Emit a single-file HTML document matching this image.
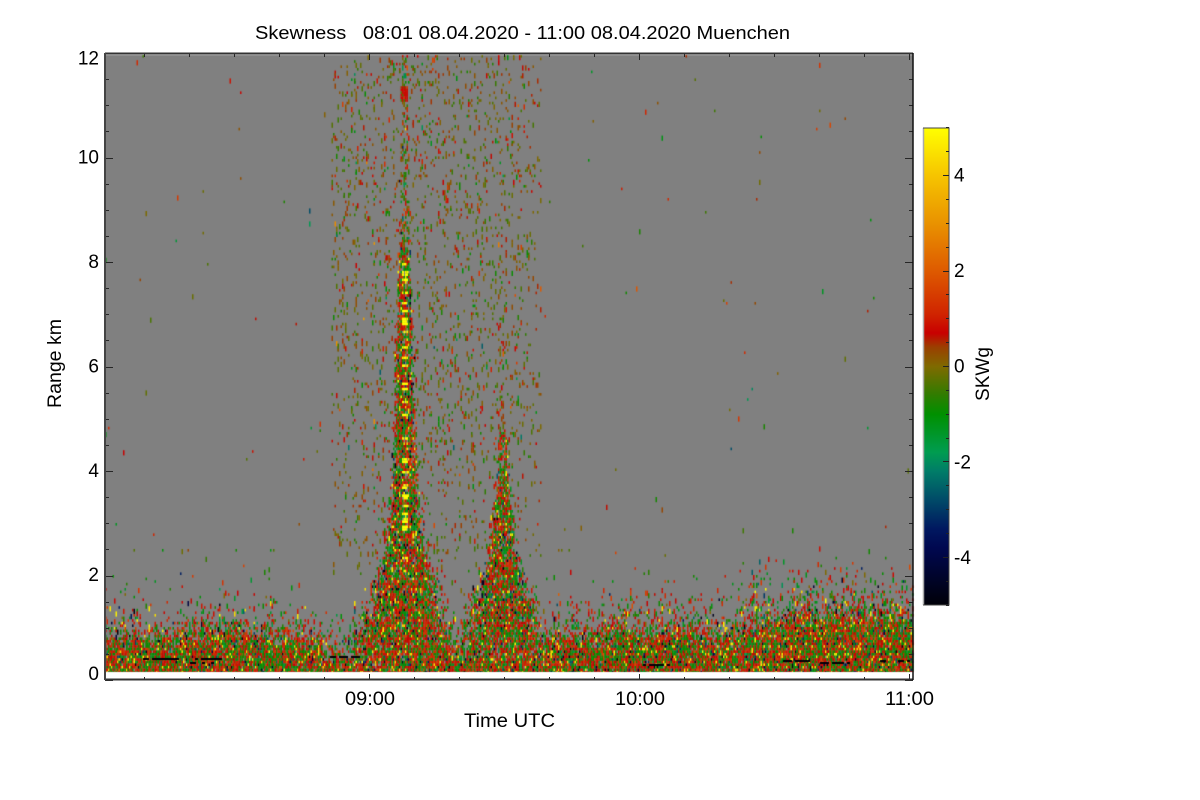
<!DOCTYPE html>
<html><head><meta charset="utf-8"><style>
html,body{margin:0;padding:0;background:#fff;width:1200px;height:800px;overflow:hidden}
canvas,svg{position:absolute;left:0;top:0}
text{font-family:"Liberation Sans",sans-serif;fill:#000;font-size:19px}
</style></head><body>
<canvas id="c" width="1200" height="800"></canvas>
<svg width="1200" height="800" viewBox="0 0 1200 800" xmlns="http://www.w3.org/2000/svg">
<defs><linearGradient id="g" x1="0" y1="0" x2="0" y2="1">
<stop offset="0" stop-color="#ffff00"/><stop offset=".1" stop-color="#f6c400"/><stop offset=".2" stop-color="#e99200"/><stop offset=".3" stop-color="#de5a00"/><stop offset=".39" stop-color="#d02400"/><stop offset=".43" stop-color="#c80000"/><stop offset=".46" stop-color="#9a4000"/><stop offset=".5" stop-color="#7f6a00"/><stop offset=".56" stop-color="#2f7c00"/><stop offset=".6" stop-color="#009000"/><stop offset=".68" stop-color="#009c50"/><stop offset=".72" stop-color="#007c68"/><stop offset=".78" stop-color="#004a68"/><stop offset=".84" stop-color="#001860"/><stop offset=".88" stop-color="#000850"/><stop offset="1" stop-color="#000008"/>
</linearGradient></defs>
<rect x="923.5" y="128" width="25" height="477" fill="url(#g)"/>
<path d="M923.5 128V605" stroke="#aaa" stroke-width="1.5" fill="none"/>
<path d="M923 128H949V605H923" stroke="#444" stroke-width="1" fill="none"/>
<path id="cbt" stroke="#222" stroke-width="1" fill="none" d=""/>
<path id="ax" stroke="#262626" stroke-width="1" fill="none" d=""/>
<path d="M105 53.5H913M105 679.5H913" stroke="#333" stroke-width="2" fill="none"/>
<path d="M105 53V680" stroke="#444" stroke-width="2" fill="none"/>
<path d="M913 53V680" stroke="#111" stroke-width="1.5" fill="none"/>
<text x="255" y="39" textLength="535" lengthAdjust="spacingAndGlyphs" xml:space="preserve" style="font-size:18px">Skewness   08:01 08.04.2020 - 11:00 08.04.2020 Muenchen</text>
<g text-anchor="end">
<text x="99" y="64.500">12</text><text x="99" y="163.500">10</text><text x="99" y="268">8</text><text x="99" y="372.500">6</text><text x="99" y="477">4</text><text x="99" y="581">2</text><text x="99" y="680">0</text>
</g>
<text x="345" y="705" textLength="50" lengthAdjust="spacingAndGlyphs">09:00</text><text x="615" y="705" textLength="50" lengthAdjust="spacingAndGlyphs">10:00</text><text x="885" y="705" textLength="49" lengthAdjust="spacingAndGlyphs">11:00</text>
<text x="464" y="727" textLength="91" lengthAdjust="spacingAndGlyphs">Time UTC</text>
<text transform="translate(61,408) rotate(-90)" textLength="89" lengthAdjust="spacingAndGlyphs">Range km</text>
<text transform="translate(989,401) rotate(-90)" textLength="54" lengthAdjust="spacingAndGlyphs">SKWg</text>
<text x="954" y="181.500">4</text><text x="954" y="277">2</text><text x="954" y="372.500">0</text><text x="954" y="468.500">-2</text><text x="954" y="564">-4</text>
</svg>
<script>
(function(){
var s=123456789;function R(){s^=s<<13;s^=s>>>17;s^=s<<5;return (s>>>0)/4294967296;}
function G(){return Math.sqrt(-2*Math.log(R()+1e-9))*Math.cos(6.2832*R());}
var ctx=document.getElementById('c').getContext('2d');
ctx.fillStyle='#fff';ctx.fillRect(0,0,1200,800);
ctx.fillStyle='#808080';ctx.fillRect(105,55,808,617);
var st=[[5,255,255,0],[4,246,196,0],[3,233,146,0],[2,222,90,0],[1.1,208,36,0],[.7,200,0,0],[.4,154,64,0],[0,127,106,0],[-.6,47,124,0],[-1,0,144,0],[-1.8,0,156,80],[-2.2,0,124,104],[-2.8,0,74,104],[-3.4,0,24,96],[-3.8,0,8,80],[-5,0,0,8]];
function col(v){v=Math.max(-5,Math.min(5,v));
 for(var i=1;i<st.length;i++){if(v>=st[i][0]){var a=st[i-1],b=st[i],t=(v-b[0])/(a[0]-b[0]);
  return 'rgb('+Math.round(b[1]+(a[1]-b[1])*t)+','+Math.round(b[2]+(a[2]-b[2])*t)+','+Math.round(b[3]+(a[3]-b[3])*t)+')';}}
 return '#000';}
function lerp(t,x){for(var i=1;i<t.length;i++){if(x<=t[i][0]){var a=t[i-1],b=t[i];return a[1]+(b[1]-a[1])*(x-a[0])/(b[0]-a[0]);}}return t[t.length-1][1];}
var W1=[[55,1.8],[200,3],[300,4.5],[400,6],[450,7],[500,9],[550,13],[600,22],[640,32],[672,38]];
var W2=[[330,.6],[400,1.2],[440,2.5],[500,5],[550,8],[590,15],[620,22],[672,30]];
var w=1.5,h=2.6;
var gv=[];var cols=Math.ceil(808/w);var val=0;
for(var i=0;i<cols;i++){val=val*.97+G()*.9;gv[i]=val;}
var yr=[];for(var j=0;j<238;j++)yr[j]=R()<.34;
for(var i=0;i<cols;i++){var x=105+i*w;
 var d;
 if(x<330)d=30+5*Math.sin((x-105)/60)+gv[i]*.8; else if(x<540)d=20+gv[i]*.5; else d=30+(x-540)*.07+gv[i]*.9;
 if(x>322&&x<368)d=12+gv[i]*.4;
 for(var j=0;j<238;j++){var y=55+j*h,hh=672-y,p=0,sig=.9,core=0;
  var bg=.0012;if(Math.abs(y-549)<2.5&&((x>118&&x<305)||(x>540&&x<620)))bg=.05;
  p=bg;
  var z=(hh-d)/(x<330?20:22);
  var pg=z<0?.97-.25*Math.max(0,1-(d-hh)/12):.72*Math.exp(-z*1.3);
  if(pg<.008)pg=0;
  if(hh>(d+72))pg=0;
  var ampG=pg>.45?2.3:(pg>.15?1.9:1.4);
  if(pg>p){p=pg;sig=ampG;}
  if(x>331&&x<541){var q=.085; if(y>450)q=.06; if(y>550)q=.035; if(x<370&&y>545)q=.015; if(x>528)q*=.6; if(q>p){p=q;sig=.55;}}
  var w1=lerp(W1,y),dx=Math.abs(x-404);
  var n=dx/w1;
  var p1=n<1?.9:.9*Math.exp(-(n-1)*(n-1)*2.6);
  var ramp=y<200?.4:(y<300?.4+.5*(y-200)/100:.9); p1*=ramp/.9;
  if(y>85&&y<100&&dx<4)p1=1;
  if(p1>p){p=p1;sig=(y<250&&R()<.8)?.8:1.9;core=1;}
  if(y>330){var w2=lerp(W2,y),dx2=Math.abs(x-502),n2=dx2/w2;
   var p2=n2<1?(y<430?.22:(y<480?.65:.88)):(y<430?0:.8*Math.exp(-(n2-1)*(n2-1)*1.8));
   if(p2>p){p=p2;sig=y<430?.9:1.6;core=2;}}
  if(R()>p)continue;
  var v;
  if(sig>1.3){v=(R()<.54?1:-1)*(.62+Math.abs(G())*.5);
    var t=R();
    if(t<.05)v=4.3+R()*.7;
    else if(t<.085)v=-4-R();
    else if(t<.11)v=-2.5-R();
    else if(t<.15)v=0;
  }else{v=G()*sig; if(R()<.05)v*=2.5;}
  var wd=w,ht=h*(R()<.35?2:1);
  if(core==1&&dx<3&&y>250&&y<575&&yr[j]&&(y<530||R()<.5)){v=5;ht=h;wd=w+.5;}
  if(core==1&&y>85&&y<100&&dx<4&&R()<.75)v=.8;
  ctx.fillStyle=col(v);
  ctx.fillRect(x,y,wd,Math.min(ht,672-y));
 }}
ctx.fillStyle='#000008';
[[140,180,658],[195,222,658],[190,214,662],[330,360,656],[780,810,660],[820,850,662],[880,910,660],[640,670,664]].forEach(function(a){for(var x=a[0];x<a[1];x+=3){if(R()<.6)ctx.fillRect(x,a[2],3,2);}});
var d='';
for(var k=0;k<=17;k++){var x=145+k*45-.5;var maj=(k%6==5);
 var L=maj?6:3;d+='M'+x+' 680V'+(680-L)+'M'+x+' 54V'+(54+L);}
for(var k=0;k<=24;k++){var y=Math.round(53+k*26.125)+.5;var maj=(k%4==0);var L=maj?8:4;
 d+='M105 '+y+'H'+(105+L)+'M913 '+y+'H'+(913-L);}
document.getElementById('ax').setAttribute('d',d);
var e='';for(var k=-10;k<=10;k++){var y=Math.round(366-k*23.87)+.5;e+='M949 '+y+'H'+(k%4==0?943:946);}
document.getElementById('cbt').setAttribute('d',e);
})();
</script>
</body></html>
